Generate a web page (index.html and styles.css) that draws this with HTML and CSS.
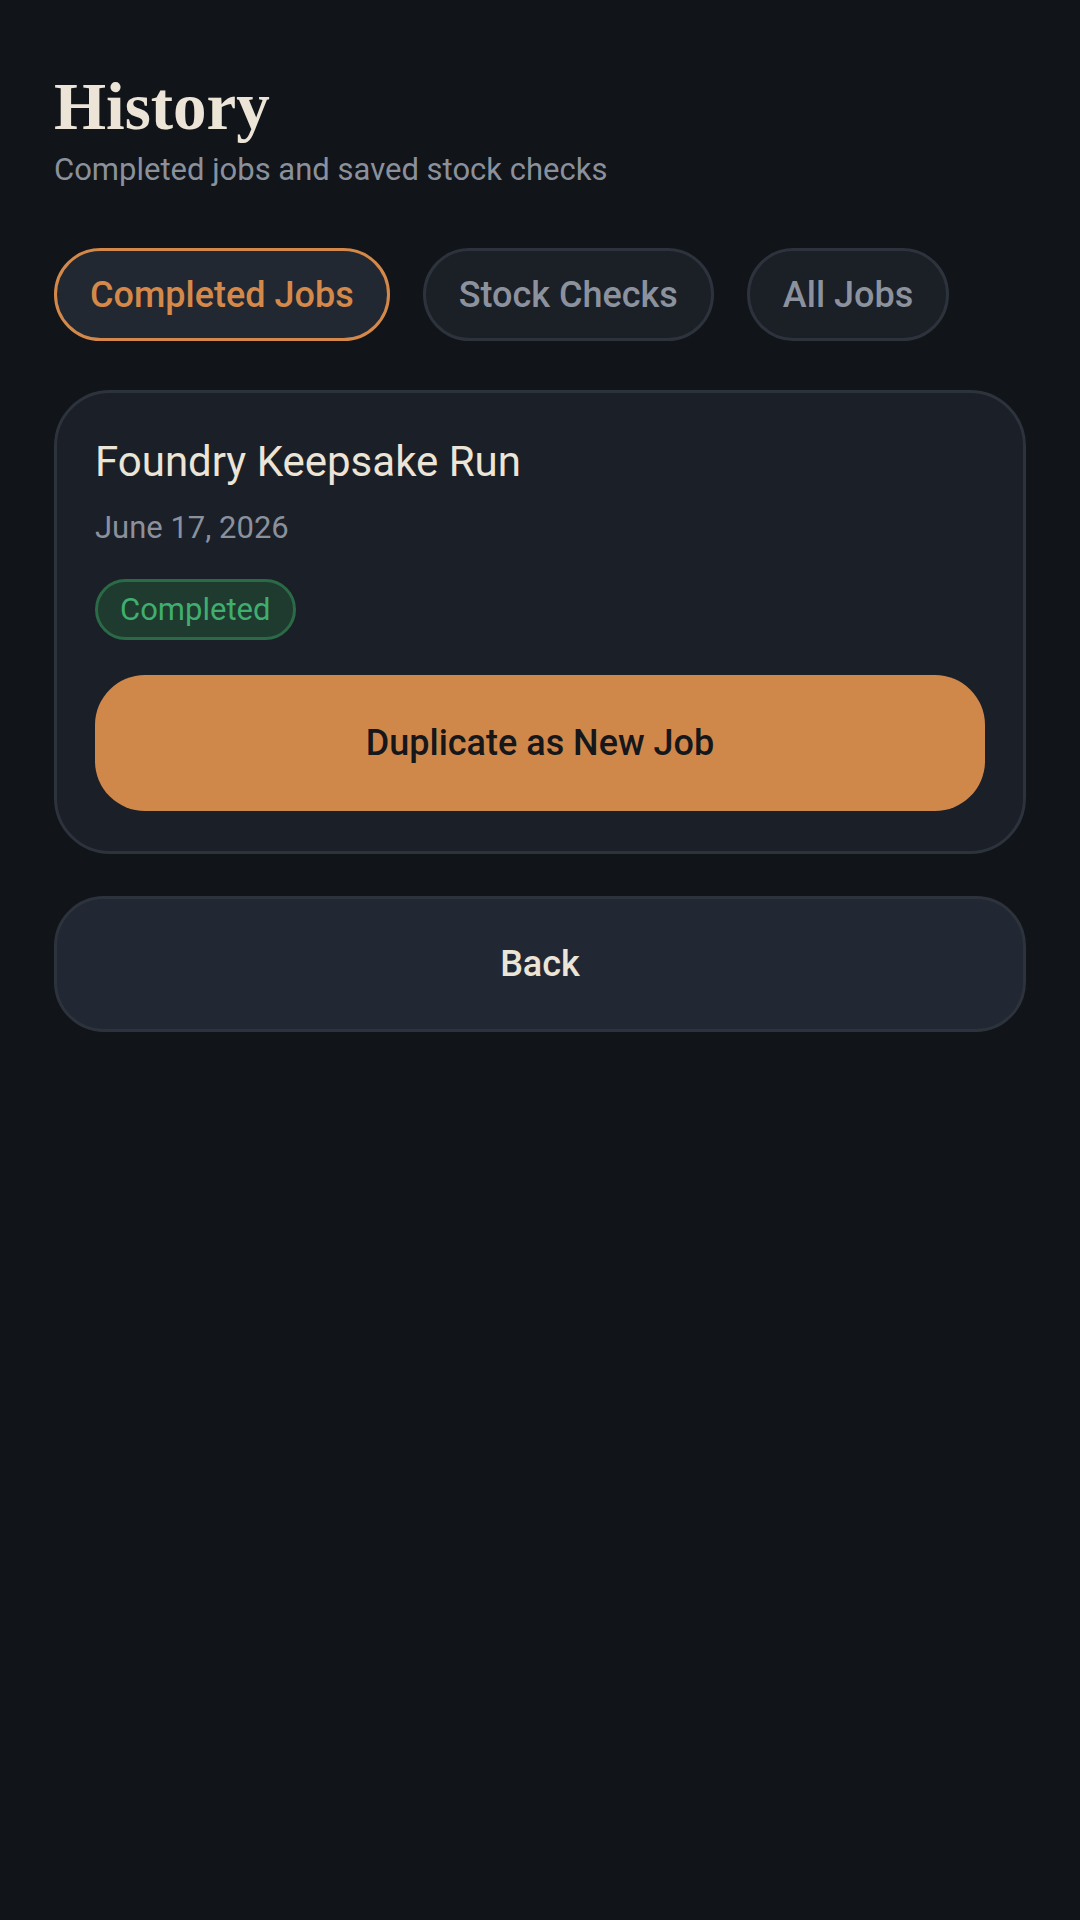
FILE: index.html
```html
<!DOCTYPE html>
<html lang="en">

<head>
    <meta charset="UTF-8">
    <meta name="viewport" content="width=device-width, initial-scale=1.0">
    <title>History</title>
    <link rel="stylesheet" href="styles.css">
</head>

<body>
    <div class="page">
        <header class="header">
            <h1>History</h1>
            <p class="subtitle">Completed jobs and saved stock checks</p>
        </header>

        <nav class="tabs">
            <button class="tab active">Completed Jobs</button>
            <button class="tab">Stock Checks</button>
            <button class="tab">All Jobs</button>
        </nav>

        <div class="job-card">
            <h2 class="job-name">Foundry Keepsake Run</h2>
            <span class="job-date">June 17, 2026</span>
            <span class="badge">Completed</span>
            <button class="btn-primary">Duplicate as New Job</button>
        </div>

        <button class="btn-back">Back</button>
    </div>
</body>

</html>
```
FILE: styles.css
```css
body {
    margin: 0;
    background-color: #111419;
    font-family: Roboto, 'Noto Sans', Arial, sans-serif;
    color: #ece4d6;
}

.page {
    padding: 66px 54px;
}

.header h1 {
    margin: 0;
    font-family: 'Liberation Serif', 'DejaVu Serif', serif;
    font-weight: bold;
    font-size: 67px;
    line-height: 80px;
    color: #ece4d6;
}

.subtitle {
    margin: 6px 0 0;
    font-size: 31px;
    line-height: 36px;
    color: #8a919c;
}

.tabs {
    display: flex;
    gap: 33px;
    margin-top: 60px;
}

.tab {
    height: 93px;
    padding: 0 33px;
    border: 3px solid #2d333c;
    border-radius: 47px;
    background-color: #1b1f26;
    font-family: Roboto, Arial, sans-serif;
    font-weight: 500;
    font-size: 36px;
    color: #8b929e;
}

.tab.active {
    border-color: #d4894a;
    background-color: #222832;
    color: #d4894a;
}

.job-card {
    display: flex;
    flex-direction: column;
    align-items: flex-start;
    margin-top: 49px;
    padding: 44px 38px 40px;
    border: 3px solid #2d333c;
    border-radius: 56px;
    background-color: #1b1f27;
}

.job-name {
    margin: 0;
    font-weight: 400;
    font-size: 42px;
    line-height: 50px;
    color: #ece4d6;
}

.job-date {
    margin-top: 23px;
    font-size: 31px;
    line-height: 36px;
    color: #8a919c;
}

.badge {
    margin-top: 33px;
    padding: 0 22px;
    height: 55px;
    line-height: 55px;
    border: 3px solid #2b6a47;
    border-radius: 31px;
    background-color: #1f3a2e;
    font-size: 31px;
    color: #3fae6e;
}

.btn-primary {
    align-self: stretch;
    margin-top: 35px;
    height: 136px;
    border: none;
    border-radius: 50px;
    background-color: #d0884a;
    font-family: Roboto, Arial, sans-serif;
    font-weight: 500;
    font-size: 36px;
    color: #15171b;
}

.btn-back {
    display: block;
    width: 100%;
    margin-top: 42px;
    height: 136px;
    border: 3px solid #2d333c;
    border-radius: 50px;
    background-color: #222833;
    font-family: Roboto, Arial, sans-serif;
    font-weight: 500;
    font-size: 36px;
    color: #ece4d6;
}
```
